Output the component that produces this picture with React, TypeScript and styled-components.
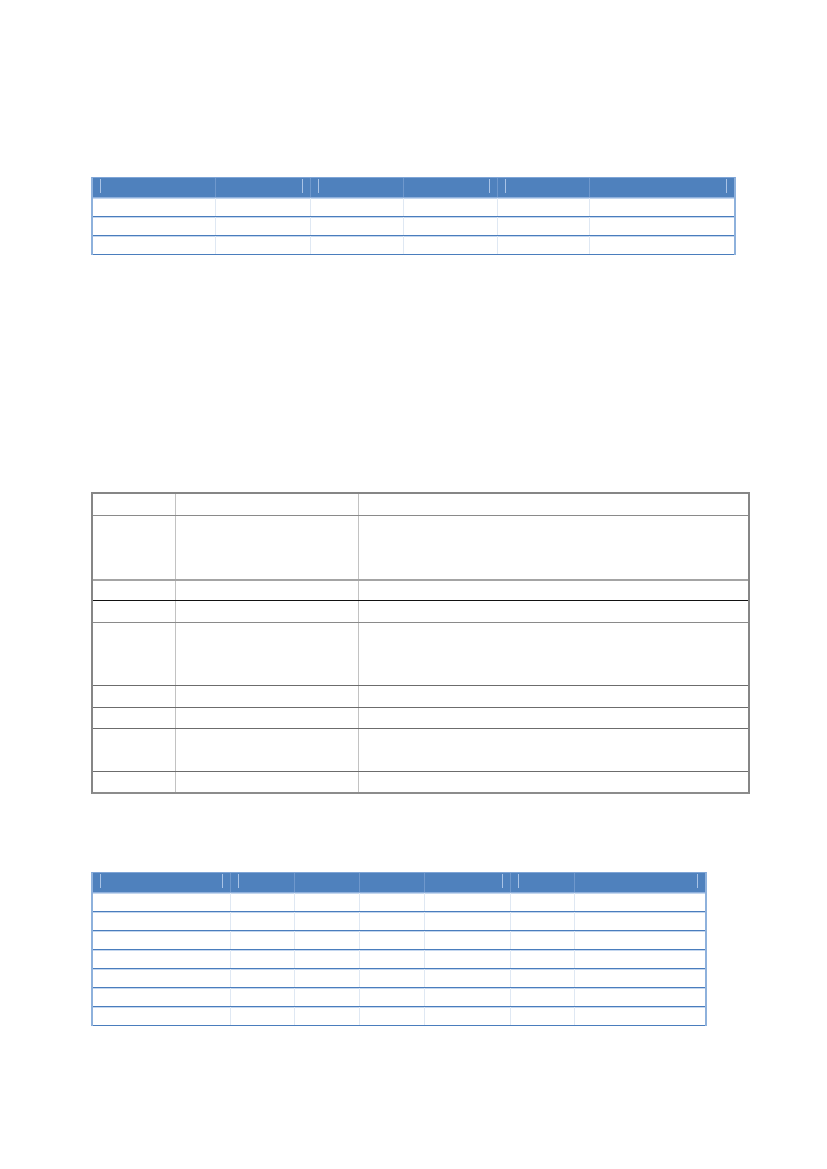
import React from 'react'
import styled, { createGlobalStyle } from 'styled-components'

const GlobalStyle = createGlobalStyle`
    html, body {
        margin: 0;
        padding: 0;
        background: #ffffff;
        font-family: "Liberation Sans", Arial, sans-serif;
    }
`

interface GridProps {
    cols: string
}

interface RowProps {
    h: number
    line?: string
    lineWidth?: number
}

interface MarkCellProps {
    marks?: string
}

const Page = styled.div`
    width: 827px;
    min-height: 1169px;
    box-sizing: border-box;
    padding: 177px 0 0 91px;
    display: flex;
    flex-direction: column;
`

/* blue "Office" styled tables */

const BlueTable = styled.div`
    box-sizing: border-box;
    width: ${(p: { w: number }) => p.w}px;
    border-left: 2px solid #8eb1dc;
    border-right: 2px solid #8eb1dc;
    border-top: 1px solid #7fa5d6;
`

const BlueHead = styled.div`
    display: grid;
    grid-template-columns: ${(p: GridProps) => p.cols};
    height: 20px;
    box-sizing: border-box;
    background: #4f81bd;
    border-bottom: 1px solid #8fb0dc;
`

const HeadCell = styled.div`
    display: flex;
    justify-content: ${(p: MarkCellProps) =>
        p.marks === 'r' ? 'flex-end' : 'space-between'};
    padding: 0 7px;
    box-sizing: border-box;
    border-left: 1px solid #6f98cc;

    &:first-child {
        border-left: none;
    }
`

const Mark = styled.span`
    display: block;
    width: 1px;
    height: 14px;
    margin-top: 1px;
    background: #a9c3e6;
`

const BlueRow = styled.div`
    display: grid;
    grid-template-columns: ${(p: GridProps) => p.cols};
    height: 19px;
    box-sizing: border-box;
    border-bottom: 1px solid #4a7dbd;
    box-shadow: inset 0 1px 0 #c3d6ee;
`

const BlueCell = styled.div`
    border-left: 1px solid #dfe8f3;

    &:first-child {
        border-left: none;
    }
`

/* grey grid table */

const GreyTable = styled.div`
    box-sizing: border-box;
    width: 659px;
    margin-top: 237px;
    border: 2px solid #868686;
    border-bottom-color: #8c8c8c;
`

const GreyRow = styled.div`
    display: grid;
    grid-template-columns: 82px 183px 1fr;
    height: ${(p: RowProps) => p.h}px;
    box-sizing: border-box;
    border-bottom: ${(p: RowProps) => p.lineWidth || 1}px solid ${(p: RowProps) => p.line || '#8a8a8a'};

    &:last-child {
        border-bottom: none;
    }
`

const GreyCell = styled.div`
    border-left: 1px solid #c2c2c2;

    &:first-child {
        border-left: none;
    }
`

const Spacer = styled.div`
    height: ${(p: { h: number }) => p.h}px;
`

const cells = (n: number) => Array.from({ length: n }, (_, i) => i)

const renderMarks = (marks?: string) => {
    if (marks === 'l') return <Mark />
    if (marks === 'r') return <Mark />
    if (marks === 'lr') return (
        <>
            <Mark />
            <Mark />
        </>
    )
    return null
}

interface BlueProps {
    w: number
    cols: string
    marks: string[]
    rows: number
}

const OfficeTable = ({ w, cols, marks, rows }: BlueProps) => {
    return (
        <BlueTable w={w}>
            <BlueHead cols={cols}>
                {marks.map((m, i) => (
                    <HeadCell key={i} marks={m}>{renderMarks(m)}</HeadCell>
                ))}
            </BlueHead>
            {cells(rows).map(r => (
                <BlueRow key={r} cols={cols}>
                    {marks.map((_, i) => <BlueCell key={i} />)}
                </BlueRow>
            ))}
        </BlueTable>
    )
}

const greyRows: RowProps[] = [
    { h: 22, line: '#8a8a8a' },
    { h: 65, line: '#a4a4a4', lineWidth: 2 },
    { h: 20, line: '#111111' },
    { h: 22, line: '#8a8a8a' },
    { h: 63, line: '#6c6c6c' },
    { h: 22, line: '#6c6c6c' },
    { h: 21, line: '#6c6c6c' },
    { h: 43, line: '#6c6c6c' },
    { h: 20 },
]

const App = () => {
    return (
        <Page>
            <GlobalStyle />
            <OfficeTable
                w={645}
                cols="122px 95px 93px 94px 92px 1fr"
                marks={['l', 'r', 'l', 'r', 'l', 'r']}
                rows={3}
            />

            <GreyTable>
                {greyRows.map((r, i) => (
                    <GreyRow key={i} h={r.h} line={r.line} lineWidth={r.lineWidth}>
                        <GreyCell />
                        <GreyCell />
                        <GreyCell />
                    </GreyRow>
                ))}
            </GreyTable>

            <Spacer h={78} />

            <OfficeTable
                w={616}
                cols="137px 64px 65px 65px 86px 64px 1fr"
                marks={['lr', 'l', '', '', 'r', 'l', 'r']}
                rows={7}
            />
        </Page>
    )
}

export default App
